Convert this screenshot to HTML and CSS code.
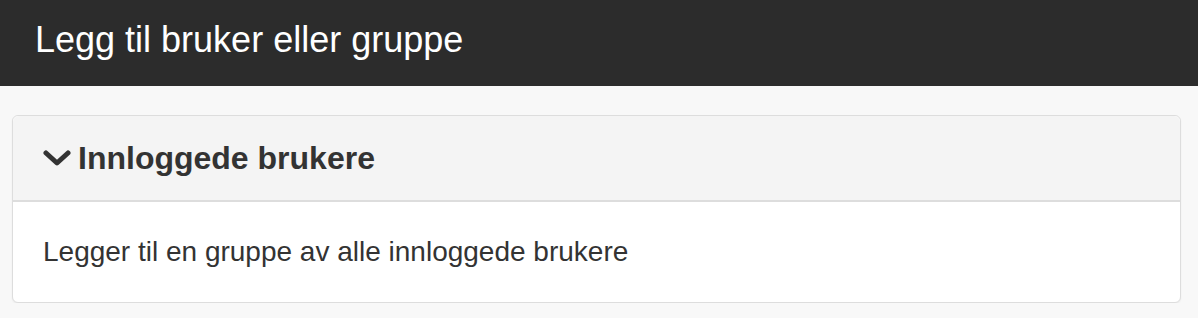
FILE: index.html
```html
<!DOCTYPE html>
<html>
<head>
  <meta charset="UTF-8" />
  <title>Legg til bruker eller gruppe</title>
  <link rel="stylesheet" href="styles.css">
</head>
<body>

  <div class="topp">
    <h1>Legg til bruker eller gruppe</h1>
  </div>

  <div class="innhold">
    <div class="panel">
      <div class="panel-tittel">
        <svg class="pil" viewBox="0 0 28 18" width="28" height="18">
          <path d="M3 4 L14 14 L25 4" fill="none" stroke="#333" stroke-width="5" stroke-linecap="round" stroke-linejoin="round"/>
        </svg>
        <span>Innloggede brukere</span>
      </div>
      <div class="panel-kropp">
        Legger til en gruppe av alle innloggede brukere
      </div>
    </div>
  </div>

</body>
</html>
```

FILE: styles.css
```css
body {
  margin: 0;
  font-family: "Liberation Sans", Arial, sans-serif;
  background-color: #f8f8f8;
  color: #333;
}
.topp {
  background-color: #2c2c2c;
  height: 86px;
  display: flex;
  align-items: center;
  padding-left: 35px;
}
.topp h1 {
  margin: 0 0 6px 0;
  color: white;
  font-weight: normal;
  font-size: 36px;
}
.innhold {
  padding: 29px 17px 0 12px;
}
.panel {
  background-color: white;
  border: 1px solid #ddd;
  border-radius: 6px;
  box-shadow: 0 1px 2px rgba(0, 0, 0, 0.06);
}
.panel-tittel {
  background-color: #f4f4f4;
  border-bottom: 2px solid #ddd;
  border-radius: 6px 6px 0 0;
  height: 84px;
  display: flex;
  align-items: center;
  padding-left: 30px;
  font-size: 32px;
  font-weight: bold;
}
.pil {
  margin-right: 7px;
}
.panel-kropp {
  height: 100px;
  display: flex;
  align-items: center;
  padding-left: 30px;
  font-size: 28px;
}
```
